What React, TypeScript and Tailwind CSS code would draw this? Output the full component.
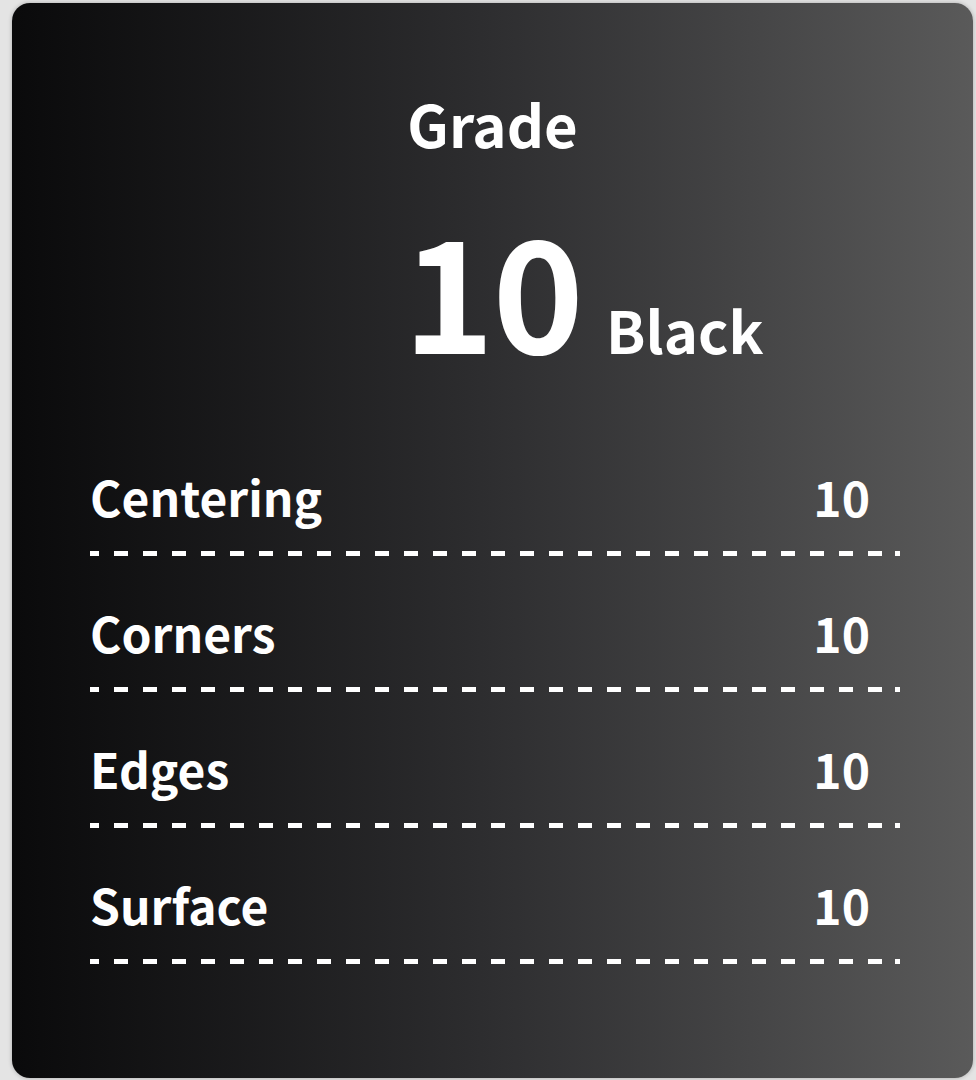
import React from "react";

const rows = [
  { label: "Centering", value: "10" },
  { label: "Corners", value: "10" },
  { label: "Edges", value: "10" },
  { label: "Surface", value: "10" },
];

const App = () => {
  return (
    <div
      className="w-[976px] h-[1080px] bg-[#e4e4e4] pt-[3px] pl-[12px] pr-[3px] overflow-hidden"
      style={{ fontFamily: '"Noto Sans CJK SC", "Noto Sans", sans-serif' }}
    >
      <div className="h-[1075px] rounded-[18px] bg-gradient-to-r from-[#0a0a0b] via-[#2e2e30] to-[#5a5a5a] shadow-[0_0_4px_rgba(0,0,0,0.25)] text-white font-bold">
        <div className="pt-[85px] text-center text-[58px] leading-[70px]">Grade</div>

        <div className="grid grid-cols-[1fr_auto_1fr] items-baseline mt-[59px]">
          <div />
          <div className="text-[155px] leading-[140px] tracking-[-2px]">10</div>
          <div className="text-[58px] leading-[70px] pl-[24px]">Black</div>
        </div>

        <div className="mt-[56px] pl-[78px] pr-[73px]">
          {rows.map((row) => (
            <div key={row.label} className="h-[136px] flex flex-col justify-end">
              <div className="flex justify-between items-center pr-[30px] text-[48px] leading-[56px]">
                <span>{row.label}</span>
                <span>{row.value}</span>
              </div>
              <div className="mt-[27px] h-[5px] bg-[repeating-linear-gradient(90deg,#ffffff_0_14px,transparent_14px_29px)] bg-[position:-5px_0]" />
            </div>
          ))}
        </div>
      </div>
    </div>
  );
};

export default App;
